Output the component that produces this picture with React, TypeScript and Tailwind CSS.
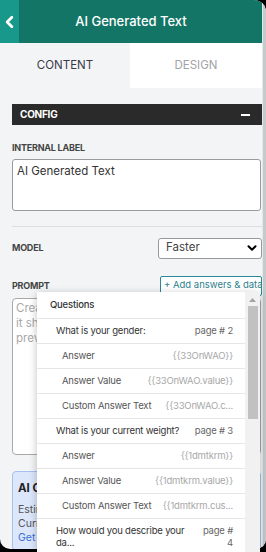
import { ChevronLeft, ChevronDown } from "lucide-react";

const groups = [
  {
    q: "What is your gender:",
    page: "page # 2",
    rows: [
      ["Answer", "{{33OnWAO}}"],
      ["Answer Value", "{{33OnWAO.value}}"],
      ["Custom Answer Text", "{{33OnWAO.c..."],
    ],
  },
  {
    q: "What is your current weight?",
    page: "page # 3",
    rows: [
      ["Answer", "{{1dmtkrm}}"],
      ["Answer Value", "{{1dmtkrm.value}}"],
      ["Custom Answer Text", "{{1dmtkrm.cus..."],
    ],
  },
];

export default function App() {
  return (
    <div className="w-[266px] h-[552px] bg-black overflow-hidden relative font-['Inter',sans-serif]">
      <div className="h-[549px] flex rounded-tr-[12px] rounded-b-[10px] overflow-hidden bg-[#f3f4f6]">
        {/* Main column */}
        <div className="w-[262px] shrink-0 flex flex-col overflow-hidden">
          {/* Header */}
          <div className="h-[43px] flex bg-[#137566] shrink-0">
            <div className="w-[19px] bg-[#17988a] flex items-center justify-center">
              <ChevronLeft className="w-5 h-5 text-white" strokeWidth={3.5} />
            </div>
            <div className="flex-1 flex items-center justify-center pr-[19px] text-white text-[13px] font-medium">
              AI Generated Text
            </div>
          </div>

          {/* Tabs */}
          <div className="h-[45px] flex shrink-0">
            <div className="w-[130px] flex items-center justify-center bg-[#f3f4f6] text-[11.5px] text-[#3b3a4c]">
              CONTENT
            </div>
            <div className="flex-1 flex items-center justify-center bg-white text-[11.5px] text-[#a2a2a8]">
              DESIGN
            </div>
          </div>

          {/* Content */}
          <div className="pl-3 pt-4 flex flex-col">
            <div className="w-[250px] h-[21px] bg-[#2a2a2a] flex items-center justify-between pl-2 pr-[12px]">
              <span className="text-white text-[10px] font-bold tracking-tight">CONFIG</span>
              <span className="w-[9px] h-[2px] bg-white" />
            </div>

            <div className="mt-[16px] text-[9px] font-bold text-[#444] tracking-tight">INTERNAL LABEL</div>
            <div className="mt-[4px] w-[249px] h-[52px] bg-white border border-[#9b9b9b] rounded-[3px] px-[4px] pt-[3px] text-[11.5px] text-[#333]">
              AI Generated Text
            </div>

            <div className="mt-[15px] w-[250px] h-px bg-[#dedede]" />

            <div className="mt-[11px] w-[250px] flex items-center justify-between">
              <span className="text-[9px] font-bold text-[#444] tracking-tight">MODEL</span>
              <div className="w-[104px] h-[21px] bg-white border border-[#999] rounded-[3px] flex items-center justify-between pl-[7px] pr-[2px] text-[11.5px] text-[#444]">
                Faster
                <ChevronDown className="w-[14px] h-[14px] text-black" strokeWidth={3.5} />
              </div>
            </div>

            <div className="mt-[17px] w-[250px] flex items-center justify-between">
              <span className="text-[9px] font-bold text-[#444] tracking-tight">PROMPT</span>
              <div className="w-[102px] h-[20px] bg-white border border-[#2c8796] rounded-[2px] flex items-center pl-[3px] text-[9.5px] text-[#2c7f8e] whitespace-nowrap overflow-hidden">
                + Add answers &amp; data
              </div>
            </div>

            <div className="mt-[2px] w-[249px] h-[157px] bg-white border border-[#a8a8a8] rounded-[4px] px-[3px] pt-[2px] text-[11.5px] leading-[15px] text-[#a9a9a9]">
              Create your prompt here,
              <br />
              it should be clear
              <br />
              preview
            </div>

            <div className="mt-[16px] w-[249px] h-[80px] bg-[#dce7fb] border border-[#a6c0ee] rounded-[4px] px-[5px] pt-[8px]">
              <div className="text-[11.5px] font-bold text-[#222]">AI Credits</div>
              <div className="mt-[6px] text-[10.5px] leading-[14px] text-[#555]">Estimated usage</div>
              <div className="text-[10.5px] leading-[14px] text-[#555]">Current balance</div>
              <div className="text-[10.5px] leading-[14px] text-[#3b6fd6]">Get more</div>
            </div>
          </div>
        </div>

        {/* Outer scroll strip */}
        <div className="flex-1 bg-[#c9c9c9] border-l border-[#d8eef0]" />
      </div>

      {/* Dropdown overlay */}
      <div className="absolute left-[37px] top-[292px] w-[223px] h-[262px] flex bg-white shadow-[0_2px_8px_rgba(0,0,0,0.25)] text-[9.5px] tracking-[-0.2px]">
        <div className="w-[208px] flex flex-col">
          <div className="h-[26px] flex items-center pl-[13px] font-medium text-[#333]">Questions</div>
          {groups.map((g) => (
            <div key={g.q}>
              <div className="h-[25px] border-t border-[#e6e6e6] flex items-center justify-between pl-[19px] pr-[12px] text-[#333] whitespace-nowrap">
                <span>{g.q}</span>
                <span className="text-[#666]">{g.page}</span>
              </div>
              {g.rows.map(([l, v]) => (
                <div key={l} className="h-[25px] border-t border-[#e6e6e6] flex items-center justify-between pl-[25px] pr-[12px] whitespace-nowrap">
                  <span className="text-[#555]">{l}</span>
                  <span className="text-[#a8a8a8]">{v}</span>
                </div>
              ))}
            </div>
          ))}
          <div className="border-t border-[#e6e6e6] flex justify-between pl-[19px] pr-[12px] pt-[6px] leading-[12px] text-[#333]">
            <span className="w-[135px]">How would you describe your da...</span>
            <span className="text-right text-[#666] w-[34px]">page # 4</span>
          </div>
        </div>
        <div className="flex-1 bg-[#f1f1f1] flex flex-col items-center pt-[6px] px-[2px]">
          <svg width="7" height="4" viewBox="0 0 7 4" className="fill-[#a3a3a3]">
            <path d="M3.5 0 L7 4 L0 4 Z" />
          </svg>
          <div className="mt-[4px] w-[10px] h-[113px] bg-[#c1c1c1]" />
        </div>
      </div>
    </div>
  );
}
